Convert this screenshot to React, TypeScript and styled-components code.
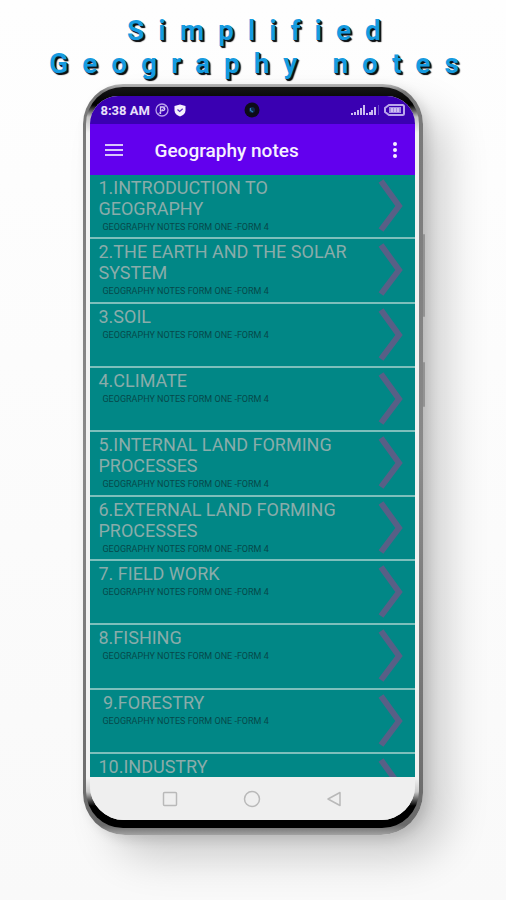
import React from "react";
import styled, { createGlobalStyle, css } from "styled-components";

const GlobalStyle = createGlobalStyle`
  *, *::before, *::after { box-sizing: border-box; }
  body {
    margin: 0;
    background: #fcfcfc;
    font-family: Roboto, "Liberation Sans", sans-serif;
  }
`;

const Page = styled.main`
  min-height: 100vh;
  display: flex;
  flex-direction: column;
  align-items: center;
  padding: 14px 0 65px;
  overflow: hidden;
  background: linear-gradient(180deg, #fefefe 0%, #fcfcfc 40%, #f9f9f9 100%);
`;

const Headline = styled.h1`
  margin: 0;
  padding-left: 16px;
  display: flex;
  flex-direction: column;
  align-items: center;
  font-size: 28px;
  line-height: 33px;
  font-weight: 700;
  letter-spacing: 14px;
  white-space: nowrap;
  color: #169be0;
  text-shadow: 1px 1px 0 #0b1a24, 2px 2px 1px #000;
`;

const Phone = styled.section`
  position: relative;
  flex: 1;
  width: 67%;
  margin-top: 4px;
  display: flex;
  padding: 3px 4px 7px 3px;
  border-radius: 40px 40px 42px 42px;
  background: linear-gradient(180deg, #b8b8b8 0, #777 8px, #8a8a8a 50%, #6a6a6a calc(100% - 10px), #a2a2a2 100%);
  box-shadow: 5px 4px 12px rgba(0, 0, 0, 0.12), 26px 24px 44px -4px rgba(0, 0, 0, 0.2);
`;

const SideKey = styled.span<{ $top: number; $height: number }>`
  position: absolute;
  right: -2px;
  top: ${(p) => p.$top}%;
  height: ${(p) => p.$height}%;
  width: 2px;
  border-radius: 1px;
  background: #939393;
`;

const Bezel = styled.div`
  flex: 1;
  min-width: 0;
  display: flex;
  padding: 9px 4px 8px;
  border-radius: 37px;
  background: linear-gradient(
    180deg,
    #161616 0,
    #000 18px,
    #c4c4c4 30px,
    #f2f2f2 46px,
    #f2f2f2 calc(100% - 50px),
    #c9c9c9 calc(100% - 36px),
    #000 calc(100% - 22px)
  );
`;

const Screen = styled.div`
  flex: 1;
  min-width: 0;
  display: flex;
  flex-direction: column;
  overflow: hidden;
  border-radius: 28px 28px 34px 34px;
  background: #efefef;
`;

const StatusBar = styled.div`
  display: grid;
  grid-template-columns: 1fr auto 1fr;
  align-items: center;
  height: 28px;
  padding: 0 10px;
  background: #3a00b2;
  color: #e9e0fa;
  font-size: 13px;
  font-weight: 700;
`;

const StatusGroup = styled.div<{ $end?: boolean }>`
  display: flex;
  align-items: center;
  gap: 5px;
  white-space: nowrap;
  ${(p) =>
    p.$end &&
    css`
      justify-content: flex-end;
    `}
`;

const AppBar = styled.header`
  display: flex;
  align-items: center;
  height: 51px;
  padding: 0 8px 0 12px;
  background: #6200ee;
  color: #fff;
`;

const IconButton = styled.button`
  display: flex;
  align-items: center;
  justify-content: center;
  padding: 0;
  border: 0;
  background: none;
  color: inherit;
  cursor: pointer;
`;

const BarButton = styled(IconButton)`
  width: 24px;
  height: 40px;
`;

const AppTitle = styled.h2`
  flex: 1;
  margin: 0;
  padding: 2px 0 0 28px;
  font-size: 19px;
  line-height: 24px;
  font-weight: 500;
  color: #f6f0ff;
`;

const TopicList = styled.ul`
  flex: 1;
  min-height: 0;
  margin: 0;
  padding: 0;
  list-style: none;
  display: grid;
  grid-template-rows: repeat(9, minmax(64px, 1fr)) 23px;
  background: #018786;
`;

const Topic = styled.li`
  min-height: 0;
  overflow: hidden;
  border-bottom: 2px solid #7dbfbc;

  &:last-child {
    border-bottom: 0;
  }
`;

const TopicLink = styled.a`
  display: flex;
  align-items: flex-start;
  justify-content: space-between;
  padding: 2px 12px 0 8px;
  color: inherit;
  text-decoration: none;
`;

const TopicText = styled.div`
  width: 260px;
`;

const TopicTitle = styled.h3`
  margin: 0;
  font-size: 18px;
  line-height: 21px;
  font-weight: 400;
  white-space: pre-wrap;
  color: #8aacaa;
`;

const TopicNote = styled.p`
  margin: 0;
  padding-left: 4px;
  font-size: 9px;
  line-height: 16px;
  white-space: nowrap;
  color: #06494a;
`;

const Chevron = styled.svg`
  flex: none;
  width: 26px;
  height: 54px;
  margin-top: 1px;
`;

const NavBar = styled.nav`
  display: flex;
  justify-content: center;
  gap: 58px;
  height: 43px;
  background: #efefef;
  color: #b9b9b9;
`;

const NavButton = styled(IconButton)`
  width: 24px;
`;

const NOTE = "GEOGRAPHY NOTES FORM ONE -FORM 4";

const topics = [
  "1.INTRODUCTION TO GEOGRAPHY",
  "2.THE EARTH AND THE SOLAR SYSTEM",
  "3.SOIL",
  "4.CLIMATE",
  "5.INTERNAL LAND FORMING PROCESSES",
  "6.EXTERNAL LAND FORMING PROCESSES",
  "7. FIELD WORK",
  "8.FISHING",
  " 9.FORESTRY",
  "10.INDUSTRY",
];

const CompassIcon = () => (
  <svg width="14" height="14" viewBox="0 0 14 14" fill="none" aria-hidden="true">
    <circle cx="7" cy="7" r="6" stroke="#b7a0ea" strokeWidth="1.3" />
    <path d="M5.500 11V4h2.500a1.600 1.600 0 0 1 0 3.500H5.500" stroke="#d9ccf6" strokeWidth="1.3" />
    <path d="M3 11.5 11 2.5" stroke="#b7a0ea" strokeWidth="1" />
  </svg>
);

const ShieldIcon = () => (
  <svg width="12" height="13" viewBox="0 0 12 13" fill="none" aria-hidden="true">
    <path d="M6 0.5 11.5 2v4.5c0 3-2.5 5-5.5 6-3-1-5.500-3-5.500-6V2Z" fill="#f4effd" />
    <path d="m3.500 5.500 2.200 2 3-2.700" stroke="#5a2cc4" strokeWidth="1.200" />
  </svg>
);

const CameraIcon = () => (
  <svg width="16" height="16" viewBox="0 0 16 16" aria-hidden="true">
    <circle cx="8" cy="8" r="7.500" fill="#0d0b18" />
    <circle cx="8" cy="8" r="3" fill="#10284a" />
    <path d="M6.500 6v2.500L9 10" fill="none" stroke="#2b7fc0" strokeWidth="1.200" />
  </svg>
);

const SignalIcon = () => (
  <svg width="29" height="12" viewBox="0 0 29 12" aria-hidden="true">
    <g fill="#cbbcf0">
      <rect x="1" y="9" width="2" height="2" />
      <rect x="4" y="8" width="2" height="3" />
      <rect x="7" y="6" width="2" height="5" />
      <rect x="10" y="4" width="2" height="7" />
      <rect x="13" y="1" width="2" height="10" />
      <rect x="16" y="9" width="2" height="2" />
      <rect x="19" y="8" width="2" height="3" />
      <rect x="21" y="6" width="2" height="5" />
      <rect x="24" y="3" width="2" height="8" />
    </g>
    <rect x="28" y="1" width="1" height="10" fill="#6b45cc" />
  </svg>
);

const BatteryIcon = () => (
  <svg width="21" height="12" viewBox="0 0 21 12" fill="none" aria-hidden="true">
    <path d="M5 1h13.500a1.500 1.500 0 0 1 1.500 1.500v7a1.500 1.500 0 0 1-1.500 1.500H5L1 8V4Z" stroke="#b9a6ea" strokeWidth="2" />
    <rect x="5" y="3" width="12" height="6" fill="#a48be2" />
    <path d="M8 4v4M11 4v4M14 4v4" stroke="#e8e0fa" strokeWidth="1.200" />
  </svg>
);

export default function App() {
  return (
    <>
      <GlobalStyle />
      <Page>
        <Headline>
          <span>Simplified</span>
          <span>Geography notes</span>
        </Headline>
        <Phone>
          <SideKey $top={20} $height={11} />
          <SideKey $top={37} $height={6} />
          <Bezel>
            <Screen>
              <StatusBar>
                <StatusGroup>
                  <span>8:38 AM</span>
                  <CompassIcon />
                  <ShieldIcon />
                </StatusGroup>
                <CameraIcon />
                <StatusGroup $end>
                  <SignalIcon />
                  <BatteryIcon />
                </StatusGroup>
              </StatusBar>
              <AppBar>
                <BarButton type="button" aria-label="Menu">
                  <svg width="18" height="14" viewBox="0 0 18 14" aria-hidden="true">
                    <path d="M0 2h18M0 7h18M0 12h18" stroke="#d9c6fb" strokeWidth="2" />
                  </svg>
                </BarButton>
                <AppTitle>Geography notes</AppTitle>
                <BarButton type="button" aria-label="More options">
                  <svg width="4" height="16" viewBox="0 0 4 16" fill="#f6f0ff" aria-hidden="true">
                    <circle cx="2" cy="2" r="2" />
                    <circle cx="2" cy="8" r="2" />
                    <circle cx="2" cy="14" r="2" />
                  </svg>
                </BarButton>
              </AppBar>
              <TopicList>
                {topics.map((title) => (
                  <Topic key={title}>
                    <TopicLink href="#">
                      <TopicText>
                        <TopicTitle>{title}</TopicTitle>
                        {title !== "10.INDUSTRY" && <TopicNote>{NOTE}</TopicNote>}
                      </TopicText>
                      <Chevron viewBox="0 0 26 54" fill="none" aria-hidden="true">
                        <path d="M4 3 22 28 4 52" stroke="#585f86" strokeWidth="6" />
                      </Chevron>
                    </TopicLink>
                  </Topic>
                ))}
              </TopicList>
              <NavBar aria-label="System navigation">
                <NavButton type="button" aria-label="Recent apps">
                  <svg width="16" height="16" viewBox="0 0 16 16" fill="none" aria-hidden="true">
                    <rect x="1.500" y="1.500" width="13" height="13" rx="1" stroke="currentColor" strokeWidth="1.500" />
                  </svg>
                </NavButton>
                <NavButton type="button" aria-label="Home">
                  <svg width="18" height="18" viewBox="0 0 18 18" fill="none" aria-hidden="true">
                    <circle cx="9" cy="9" r="7.500" stroke="currentColor" strokeWidth="1.500" />
                  </svg>
                </NavButton>
                <NavButton type="button" aria-label="Back">
                  <svg width="16" height="16" viewBox="0 0 16 16" fill="none" aria-hidden="true">
                    <path d="M14 1.500v13L2 8Z" stroke="currentColor" strokeWidth="1.500" strokeLinejoin="round" />
                  </svg>
                </NavButton>
              </NavBar>
            </Screen>
          </Bezel>
        </Phone>
      </Page>
    </>
  );
}
